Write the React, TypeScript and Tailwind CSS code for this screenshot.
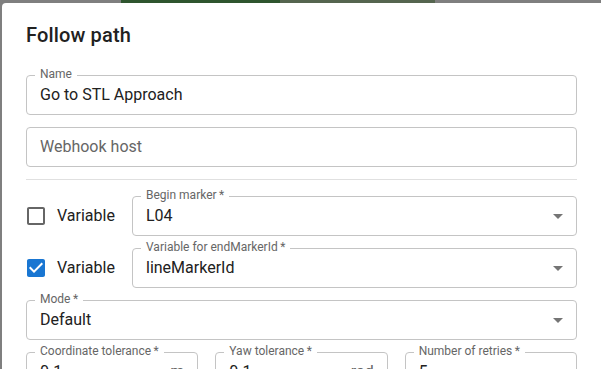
import React from 'react';

const ArrowDrop: React.FC = () => (
    <svg viewBox="0 0 24 24" className="h-6 w-6 shrink-0 fill-[rgba(0,0,0,0.54)]">
        <path d="M7 10l5 5 5-5z" />
    </svg>
);

const Check: React.FC<{checked?: boolean}> = ({checked}) => (
    <svg viewBox="0 0 24 24" className={`h-6 w-6 shrink-0 -ml-[2px] ${checked ? 'fill-[#1976d2]' : 'fill-[rgba(0,0,0,0.6)]'}`}>
        {checked ? (
            <path d="M19 3H5c-1.11 0-2 .9-2 2v14c0 1.1.89 2 2 2h14c1.1 0 2-.9 2-2V5c0-1.1-.89-2-2-2zm-9 14l-5-5 1.41-1.41L10 14.17l7.59-7.59L19 8l-9 9z" />
        ) : (
            <path d="M19 5v14H5V5h14m0-2H5c-1.11 0-2 .9-2 2v14c0 1.1.89 2 2 2h14c1.1 0 2-.9 2-2V5c0-1.1-.9-2-2-2z" />
        )}
    </svg>
);

type FieldProps = {
    label?: string;
    value?: string;
    placeholder?: string;
    select?: boolean;
    unit?: string;
    className?: string;
};

const Field: React.FC<FieldProps> = ({label, value, placeholder, select, unit, className = ''}) => (
    <div className={`relative flex h-[40px] items-center rounded-[4px] border border-[#c4c4c4] pl-[13px] ${select ? 'pr-[6px]' : 'pr-[13px]'} ${className}`}>
        {label && (
            <span className="absolute left-[8px] top-[-9px] bg-white px-[5px] text-[12px] leading-[14px] text-[#666666] whitespace-nowrap">
                {label}
            </span>
        )}
        {placeholder ? (
            <span className="flex-1 text-[16px] text-[#666666]">{placeholder}</span>
        ) : (
            <span className="flex-1 text-[16px] text-[#212121]">{value}</span>
        )}
        {unit && <span className="text-[16px] text-[#666666]">{unit}</span>}
        {select && <ArrowDrop />}
    </div>
);

const VariableRow: React.FC<{checked?: boolean; label: string; value: string}> = ({checked, label, value}) => (
    <div className="flex items-center">
        <div className="flex w-[106px] items-center gap-[9px]">
            <Check checked={checked} />
            <span className="text-[16px] text-[#212121]">Variable</span>
        </div>
        <Field className="flex-1" label={label} value={value} select />
    </div>
);

export default function App() {
    return (
        <div className="flex h-[369px] w-[601px] flex-col overflow-hidden bg-[#7f7f7f] font-['Roboto',sans-serif]">
            <div className="flex h-[3px] shrink-0 pl-[121px]">
                <div className="w-[159px] bg-[#2f552f]" />
                <div className="w-[155px] bg-[#55654f]" />
            </div>
            <div className="ml-[2px] flex-1 rounded-tl-[4px] bg-white">
                <h2 className="px-[24px] pt-[16px] text-[20px] font-medium leading-[32px] tracking-[0.15px] text-[#212121]">
                    Follow path
                </h2>
                <div className="flex flex-col gap-[12px] px-[24px] pt-[24px]">
                    <Field label="Name" value="Go to STL Approach" />
                    <Field placeholder="Webhook host" />
                    <div className="h-px bg-[#e0e0e0]" />
                    <div className="mt-[4px] flex flex-col gap-[12px]">
                        <VariableRow label={'Begin marker\u2009*'} value="L04" />
                        <VariableRow checked label={'Variable for endMarkerId\u2009*'} value="lineMarkerId" />
                        <Field label={'Mode\u2009*'} value="Default" select />
                        <div className="grid grid-cols-3 gap-[17px]">
                            <Field label={'Coordinate tolerance\u2009*'} value="0.1" unit="m" />
                            <Field label={'Yaw tolerance\u2009*'} value="0.1" unit="rad" />
                            <Field label={'Number of retries\u2009*'} value="5" />
                        </div>
                    </div>
                </div>
            </div>
        </div>
    );
}
